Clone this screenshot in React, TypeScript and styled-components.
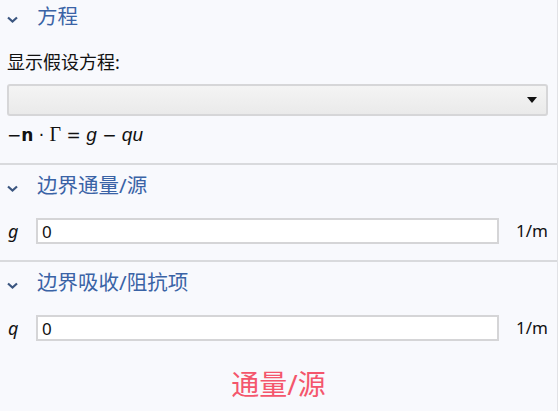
import React from 'react'
import styled, { createGlobalStyle } from 'styled-components'

const GlobalStyle = createGlobalStyle`
  html, body {
    margin: 0;
    padding: 0;
    background: #f8f9fd;
  }
  * {
    box-sizing: border-box;
  }
`

const cjk = `"Noto Sans", "Noto Sans CJK SC", sans-serif`

const Panel = styled.div`
  width: 558px;
  height: 411px;
  overflow: hidden;
  border-right: 1px solid #e1e2e6;
  background: #f8f9fd;
  font-family: ${cjk};
  color: #111;
`

const Inner = styled.div`
  margin-top: -4px;
`

const Section = styled.section<{ $padBottom: number; $divider?: boolean }>`
  padding-bottom: ${p => p.$padBottom}px;
  border-bottom: ${p => (p.$divider ? '2px solid #d9dadd' : 'none')};
`

const Header = styled.div`
  height: 40px;
  display: flex;
  align-items: center;
  padding-left: 7px;
  gap: 19px;
`

const Chevron = styled.svg`
  width: 11px;
  height: 7px;
  margin-top: 7px;
  flex: none;
`

const Title = styled.span`
  font-size: 20.5px;
  color: #3a63a6;
  line-height: 1;
`

const Body = styled.div`
  padding: 0 9px 0 7px;
`

const Label = styled.div`
  font-size: 18px;
  line-height: 18px;
  margin-top: 17px;
`

const Select = styled.div`
  margin-top: 13px;
  height: 32px;
  border: 2px solid #d6d6d8;
  border-radius: 3px;
  background: linear-gradient(#f4f4f4, #eaeaea);
  display: flex;
  align-items: center;
  justify-content: flex-end;
  padding-right: 9px;
`

const Caret = styled.span`
  width: 0;
  height: 0;
  border-left: 5px solid transparent;
  border-right: 5px solid transparent;
  border-top: 6px solid #111;
`

const Equation = styled.div`
  margin-top: 7px;
  font-family: "DejaVu Sans", sans-serif;
  font-size: 17px;
  line-height: 22px;
  white-space: pre;
`

const Bold = styled.b`
  font-weight: 700;
`

const Greek = styled.span`
  font-family: "Liberation Serif", serif;
  font-size: 20px;
`

const Ital = styled.i`
  font-family: "Liberation Sans", Arial, sans-serif;
  font-size: 19px;
  font-style: italic;
`

const Row = styled.div`
  display: flex;
  align-items: center;
  margin-top: 13px;
`

const Sym = styled.span`
  width: 29px;
  padding-left: 1px;
  font-style: italic;
  font-size: 18px;
  line-height: 20px;
`

const Input = styled.div`
  flex: 1;
  height: 26px;
  border: 2px solid #d5d5d7;
  background: #fff;
  display: flex;
  align-items: center;
  padding-left: 4px;
  font-size: 17px;
`

const Unit = styled.span`
  margin-left: 17px;
  font-size: 17px;
  line-height: 20px;
`

const Footer = styled.div`
  text-align: center;
  font-size: 28px;
  color: #f4566c;
  margin-top: 23px;
  line-height: 40px;
`

const ChevronIcon = () => (
  <Chevron viewBox="0 0 11 7">
    <path d="M1 1.5 L5.5 5.5 L10 1.5" fill="none" stroke="#3b5680" strokeWidth="2.2" />
  </Chevron>
)

function SectionHeader({ title }: { title: string }) {
  return (
    <Header>
      <ChevronIcon />
      <Title>{title}</Title>
    </Header>
  )
}

function ValueRow({ sym, value, unit }: { sym: string; value: string; unit: string }) {
  return (
    <Row>
      <Sym>{sym}</Sym>
      <Input>{value}</Input>
      <Unit>{unit}</Unit>
    </Row>
  )
}

export default function App() {
  return (
    <Panel>
      <GlobalStyle />
      <Inner>
        <Section $padBottom={17} $divider>
          <SectionHeader title="方程" />
          <Body>
            <Label>显示假设方程:</Label>
            <Select>
              <Caret />
            </Select>
            <Equation>
              −<Bold>n</Bold> · <Greek>Γ</Greek> = <Ital>g</Ital> − <Ital>qu</Ital>
            </Equation>
          </Body>
        </Section>
        <Section $padBottom={16} $divider>
          <SectionHeader title="边界通量/源" />
          <Body>
            <ValueRow sym="g" value="0" unit="1/m" />
          </Body>
        </Section>
        <Section $padBottom={0}>
          <SectionHeader title="边界吸收/阻抗项" />
          <Body>
            <ValueRow sym="q" value="0" unit="1/m" />
          </Body>
        </Section>
      </Inner>
      <Footer>通量/源</Footer>
    </Panel>
  )
}
